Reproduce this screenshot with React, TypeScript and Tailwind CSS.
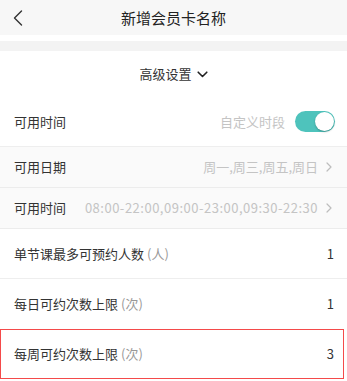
import React from "react";

const font = { fontFamily: '"Noto Sans CJK SC", "Noto Sans", sans-serif' };

function ChevronRight() {
  return (
    <svg width="6" height="10" viewBox="0 0 6 10" className="ml-[8px]">
      <path d="M1 1 L5 5 L1 9" fill="none" stroke="#bdbdbd" strokeWidth="1.2" strokeLinecap="round" strokeLinejoin="round" />
    </svg>
  );
}

export default function App() {
  return (
    <div className="w-[347px] h-[381px] bg-white overflow-hidden text-[#333]" style={font}>
      {/* Header */}
      <div className="h-[35px] bg-[#f7f7f7] flex items-center">
        <div className="w-[40px] flex items-center pl-[13px]">
          <svg width="10" height="16" viewBox="0 0 10 16">
            <path d="M8.5 1 L1.5 8 L8.5 15" fill="none" stroke="#333" strokeWidth="1.4" strokeLinecap="round" strokeLinejoin="round" />
          </svg>
        </div>
        <div className="flex-1 text-center text-[15px] text-[#222] leading-none">新增会员卡名称</div>
        <div className="w-[40px]" />
      </div>
      <div className="h-[6px] bg-white" />
      <div className="h-[10px] bg-[#f3f3f3]" />

      {/* Advanced settings */}
      <div className="h-[46px] flex items-center justify-center text-[13px] text-[#333]">
        <span>高级设置</span>
        <svg width="11" height="7" viewBox="0 0 11 7" className="ml-[5px]">
          <path d="M1.2 1.2 L5.5 5.5 L9.8 1.2" fill="none" stroke="#222" strokeWidth="1.6" strokeLinecap="round" strokeLinejoin="round" />
        </svg>
      </div>

      {/* Row: 可用时间 toggle */}
      <div className="h-[50px] flex items-center pl-[14px] pr-[12px] border-b border-[#eeeeee]">
        <span className="text-[13px]">可用时间</span>
        <span className="ml-auto text-[13px] text-[#c4c4c4]">自定义时段</span>
        <div className="ml-[10px] w-[40px] h-[21px] rounded-full bg-[#4ec3bc] flex items-center justify-end pr-[1px]">
          <div className="w-[19px] h-[19px] rounded-full bg-white shadow-[0_1px_2px_rgba(0,0,0,0.25)]" />
        </div>
      </div>

      {/* Row: 可用日期 */}
      <div className="h-[41px] flex items-center pl-[14px] pr-[15px] bg-[#fafafa] border-b border-[#ececec]">
        <span className="text-[13px]">可用日期</span>
        <span className="ml-auto text-[13px] text-[#c4c4c4]">周一,周三,周五,周日</span>
        <ChevronRight />
      </div>

      {/* Row: 可用时间 */}
      <div className="h-[41px] flex items-center pl-[14px] pr-[15px] bg-[#fafafa] border-b border-[#ececec]">
        <span className="text-[13px]">可用时间</span>
        <span className="ml-auto text-[13px] text-[#c4c4c4] tracking-[0.5px]">08:00-22:00,09:00-23:00,09:30-22:30</span>
        <ChevronRight />
      </div>

      {/* Row: 单节课 */}
      <div className="h-[50px] flex items-center pl-[14px] pr-[13px] border-b border-[#eeeeee]">
        <span className="text-[13px]">单节课最多可预约人数</span>
        <span className="text-[13px] text-[#999] ml-[3px]">(人)</span>
        <span className="ml-auto text-[13px]">1</span>
      </div>

      {/* Row: 每日 */}
      <div className="h-[50px] flex items-center pl-[14px] pr-[13px]">
        <span className="text-[13px]">每日可约次数上限</span>
        <span className="text-[13px] text-[#999] ml-[3px]">(次)</span>
        <span className="ml-auto text-[13px]">1</span>
      </div>

      {/* Row: 每周 (highlighted) */}
      <div className="h-[50px] mr-[3px] flex items-center pl-[13px] pr-[9px] border-[1.5px] border-[#f44a4a]">
        <span className="text-[13px]">每周可约次数上限</span>
        <span className="text-[13px] text-[#999] ml-[3px]">(次)</span>
        <span className="ml-auto text-[13px]">3</span>
      </div>
    </div>
  );
}
